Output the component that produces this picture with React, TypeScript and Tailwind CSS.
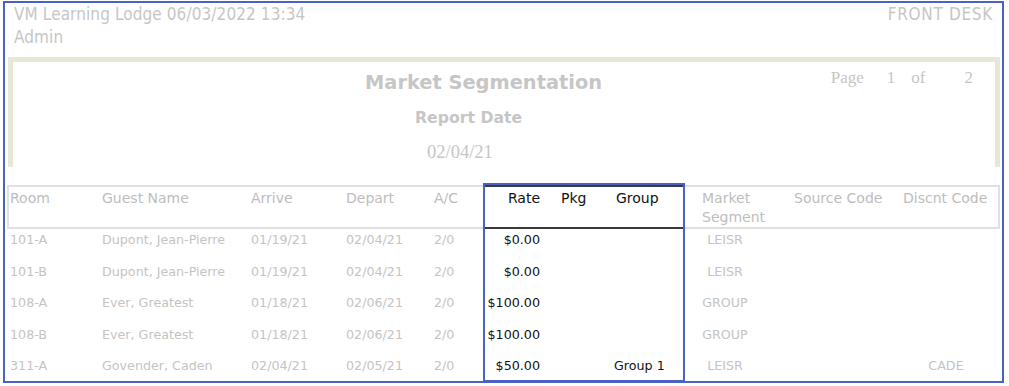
type Row = {
  room: string;
  guest: string;
  arrive: string;
  depart: string;
  ac: string;
  rate: string;
  pkg: string;
  group: string;
  market: string;
  source: string;
  discount: string;
};

const rows: Row[] = [
  { room: "101-A", guest: "Dupont, Jean-Pierre", arrive: "01/19/21", depart: "02/04/21", ac: "2/0", rate: "$0.00", pkg: "", group: "", market: "LEISR", source: "", discount: "" },
  { room: "101-B", guest: "Dupont, Jean-Pierre", arrive: "01/19/21", depart: "02/04/21", ac: "2/0", rate: "$0.00", pkg: "", group: "", market: "LEISR", source: "", discount: "" },
  { room: "108-A", guest: "Ever, Greatest", arrive: "01/18/21", depart: "02/06/21", ac: "2/0", rate: "$100.00", pkg: "", group: "", market: "GROUP", source: "", discount: "" },
  { room: "108-B", guest: "Ever, Greatest", arrive: "01/18/21", depart: "02/06/21", ac: "2/0", rate: "$100.00", pkg: "", group: "", market: "GROUP", source: "", discount: "" },
  { room: "311-A", guest: "Govender, Caden", arrive: "02/04/21", depart: "02/05/21", ac: "2/0", rate: "$50.00", pkg: "", group: "Group 1", market: "LEISR", source: "", discount: "CADE" },
];

function ReportTitle() {
  return (
    <div className="ml-[3px] mt-[8px] w-[992px] h-[110px] border-[5px] border-b-0 border-[#e8e6d4] text-[#c6c6c6]">
      <div className="flex items-start pt-[9px]">
        <div className="pl-[352px] font-['DejaVu_Sans',sans-serif] font-bold text-[19.4px] leading-[24px]">
          Market Segmentation
        </div>
        <div className="ml-auto mr-[22px] -mt-[4px] flex font-['Liberation_Serif',serif] text-[17px] leading-[22px]">
          <span>Page</span>
          <span className="ml-[23px]">1</span>
          <span className="ml-[16px]">of</span>
          <span className="ml-[39px]">2</span>
        </div>
      </div>
      <div className="mt-[13px] pl-[402px] font-['DejaVu_Sans',sans-serif] font-bold text-[15.7px] leading-[20px]">
        Report Date
      </div>
      <div className="mt-[13px] pl-[414px] font-['Liberation_Serif',serif] text-[18.5px] leading-[22px]">
        02/04/21
      </div>
    </div>
  );
}

function TableHeader() {
  return (
    <div className="mt-[18px] ml-[2px] w-[993px] h-[44px] border-2 border-[#e0e0e0] flex text-[14px] leading-[19px] text-[#bdbdbd]">
      <div className="w-[86px] pl-px pt-[2px]">Room</div>
      <div className="w-[149px] pl-[7px] pt-[2px]">Guest Name</div>
      <div className="w-[95px] pl-[7px] pt-[2px]">Arrive</div>
      <div className="w-[88px] pl-[7px] pt-[2px]">Depart</div>
      <div className="w-[58px] pl-[7px] pt-[2px]">A/C</div>
      {/* selected columns get a dark rule */}
      <div className="flex -my-[2px] border-y-2 border-[#3a3a3a] text-[#111]">
        <div className="w-[56px] pr-px pt-[2px] text-right">Rate</div>
        <div className="w-[66px] pl-[20px] pt-[2px]">Pkg</div>
        <div className="w-[78px] pl-[9px] pt-[2px]">Group</div>
      </div>
      <div className="w-[102px] pl-[17px] pt-[2px]">
        Market
        <br />
        Segment
      </div>
      <div className="w-[107px] pl-[7px] pt-[2px]">Source Code</div>
      <div className="w-[100px] pl-[9px] pt-[2px]">Discnt Code</div>
    </div>
  );
}

function TableRow({ row }: { row: Row }) {
  return (
    <div className="ml-[4px] flex h-[31.5px] pt-px text-[12.7px] leading-[20px] text-[#c4c4c4]">
      <div className="w-[86px] pl-px">{row.room}</div>
      <div className="w-[149px] pl-[7px]">{row.guest}</div>
      <div className="w-[95px] pl-[7px]">{row.arrive}</div>
      <div className="w-[88px] pl-[7px]">{row.depart}</div>
      <div className="w-[58px] pl-[7px]">{row.ac}</div>
      <div className="w-[56px] pr-px text-right text-[#111]">{row.rate}</div>
      <div className="w-[66px] pl-[20px] text-[#111]">{row.pkg}</div>
      <div className="w-[78px] pl-[7px] text-[#111]">{row.group}</div>
      <div className="w-[102px] pl-[17px]">
        <div className="w-[46px] text-center">{row.market}</div>
      </div>
      <div className="w-[107px] pl-[7px]">{row.source}</div>
      <div className="w-[100px] pl-[9px]">
        <div className="w-[86px] text-center">{row.discount}</div>
      </div>
    </div>
  );
}

export default function App() {
  return (
    <div className="w-[1009px] h-[386px] bg-white pt-px pl-[3px] font-['DejaVu_Sans',sans-serif]">
      <div className="relative w-[1001px] h-[382px] border-2 border-[#4a62c5]">
        <div className="flex justify-between px-[9px] text-[#c6c6c6] font-['DejaVu_Sans_Condensed','DejaVu_Sans',sans-serif] text-[17px] leading-[23px]">
          <div className="tracking-[0.1px]">
            <div>VM Learning Lodge 06/03/2022 13:34</div>
            <div>Admin</div>
          </div>
          <div className="tracking-[0.7px]">FRONT DESK</div>
        </div>

        <ReportTitle />
        <TableHeader />
        {rows.map((r) => (
          <TableRow key={r.room} row={r} />
        ))}

        {/* highlight frame around the rate columns */}
        <div className="absolute left-[478px] top-[180px] w-[202px] bottom-[-1px] border-2 border-[#4a62c5] pointer-events-none" />
      </div>
    </div>
  );
}
